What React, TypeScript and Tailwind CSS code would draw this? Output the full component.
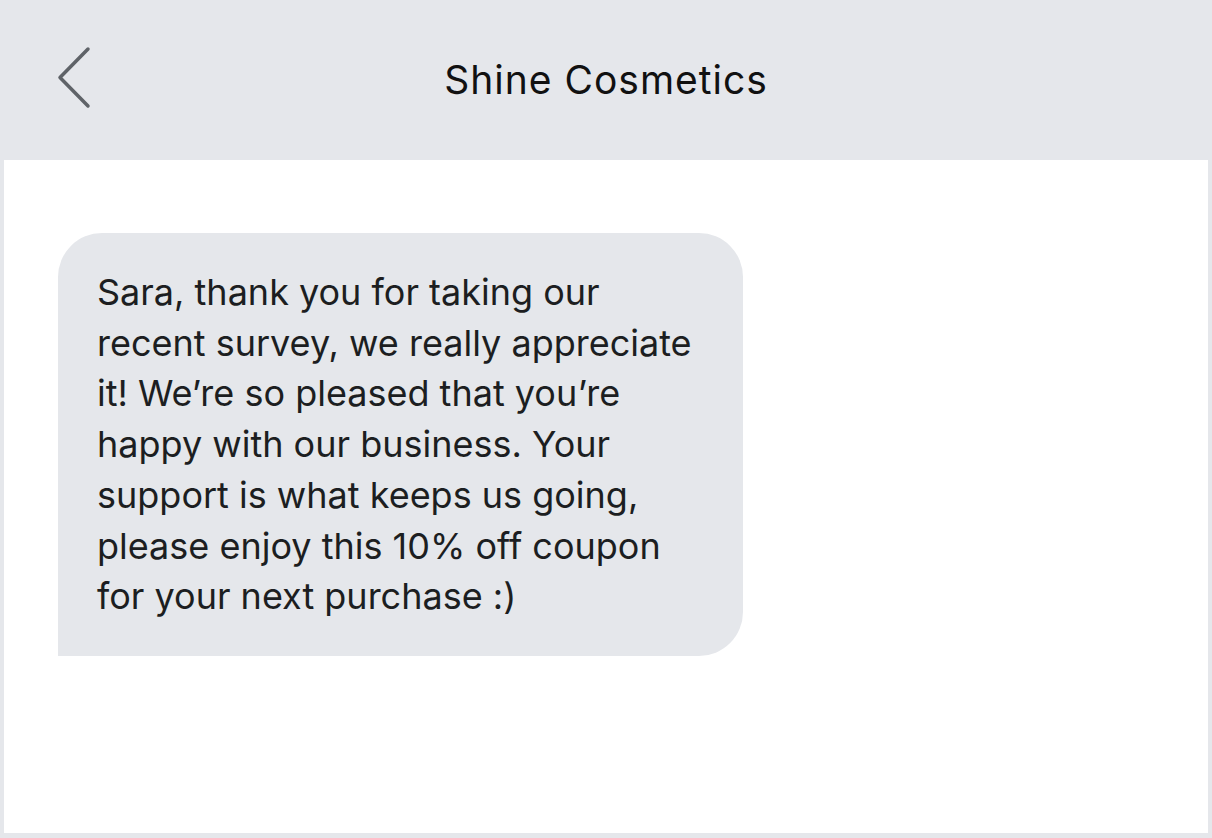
import React from "react";

export default function App() {
  return (
    <div className="w-[1212px] h-[838px] bg-[#e5e7eb] flex flex-col" style={{ fontFamily: 'Inter, "Liberation Sans", sans-serif' }}>
      <header className="h-[160px] shrink-0 relative flex justify-center pt-[60px]">
        <svg className="absolute left-[56px] top-[46px]" width="40" height="64" viewBox="0 0 40 64" fill="none">
          <path d="M32 3 L4 31.5 L32 60" stroke="#5f6368" strokeWidth="3.5" strokeLinecap="round" strokeLinejoin="round" />
        </svg>
        <h1 className="text-[39px] leading-none text-[#111111] tracking-[1px] h-[39px]">Shine Cosmetics</h1>
      </header>
      <main className="flex-1 mx-[4px] mb-[5px] bg-white pt-[73px] pl-[54px]">
        <div className="w-[685px] h-[423px] bg-[#e5e7eb] rounded-[44px] rounded-bl-none pl-[39px] pt-[34px] pr-[10px]">
          <p className="text-[36px] leading-[50.7px] text-[#1c1e21] whitespace-nowrap">
            Sara, thank you for taking our<br />
            recent survey, we really appreciate<br />
            it! We’re so pleased that you’re<br />
            happy with our business. Your<br />
            support is what keeps us going,<br />
            please enjoy this 10% off coupon<br />
            for your next purchase :)
          </p>
        </div>
      </main>
    </div>
  );
}
